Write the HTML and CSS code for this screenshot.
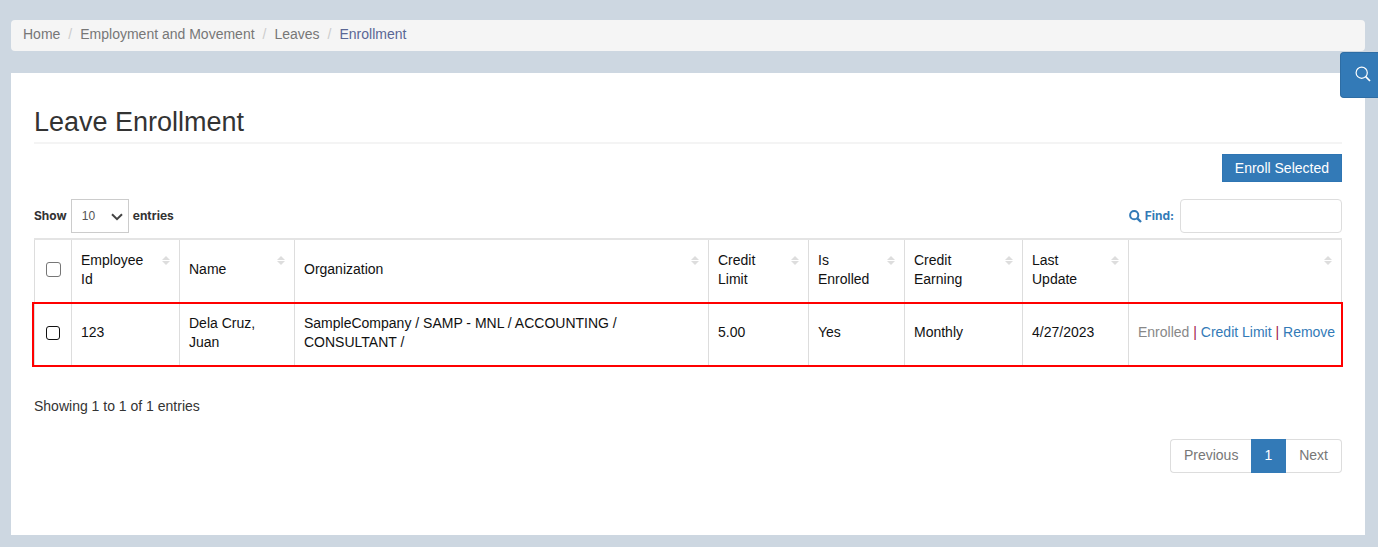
FILE: index.html
```html
<!DOCTYPE html>
<html lang="en">
<head>
<meta charset="utf-8">
<title>Leave Enrollment</title>
<link rel="stylesheet" href="styles.css">
</head>
<body>
<nav aria-label="Breadcrumb">
  <ol class="breadcrumb">
    <li><a href="#">Home</a></li>
    <li><a href="#">Employment and Movement</a></li>
    <li><a href="#">Leaves</a></li>
    <li><a class="current" href="#" aria-current="page">Enrollment</a></li>
  </ol>
</nav>
<button class="search-tab" type="button" aria-label="Search">
  <svg width="16" height="16" viewBox="0 0 16 16" fill="none" stroke="currentColor" stroke-width="1.2"><circle cx="6.7" cy="6.7" r="5.6"/><path d="M10.7 10.7 15 15" stroke-width="1.7"/></svg>
</button>
<main class="panel">
  <h1 class="title">Leave Enrollment</h1>
  <div class="actions"><button class="enroll" type="button">Enroll Selected</button></div>
  <div class="tools">
    <div class="length">
      <label for="length">Show</label>
      <span class="select-wrap">
        <select id="length"><option>10</option><option>25</option><option>50</option></select>
        <svg class="chevron" width="12" height="8" viewBox="0 0 12 8" fill="none" stroke="currentColor" stroke-width="2"><path d="M1 1.2 6 6.2 11 1.2"/></svg>
      </span>
      <span>entries</span>
    </div>
    <div class="find">
      <label for="find"><svg width="13" height="13" viewBox="0 0 13 13" fill="none" stroke="currentColor" stroke-width="2"><circle cx="5.2" cy="5.2" r="4.1"/><path d="M8.3 8.3 12 12" stroke-width="2.4"/></svg>Find:</label>
      <input id="find" type="text">
    </div>
  </div>
  <table class="grid">
    <colgroup>
      <col class="c-check"><col class="c-id"><col class="c-name"><col><col class="c-limit"><col class="c-enrolled"><col class="c-earning"><col class="c-update"><col class="c-actions">
    </colgroup>
    <thead>
      <tr>
        <th class="check"><input type="checkbox" aria-label="Select all"></th>
        <th class="sortable">Employee Id</th>
        <th class="sortable">Name</th>
        <th class="sortable">Organization</th>
        <th class="sortable">Credit Limit</th>
        <th class="sortable">Is Enrolled</th>
        <th class="sortable">Credit Earning</th>
        <th class="sortable">Last Update</th>
        <th class="sortable" aria-label="Actions"></th>
      </tr>
    </thead>
    <tbody>
      <tr class="marked">
        <td class="check"><input class="dark" type="checkbox" aria-label="Select Dela Cruz, Juan"></td>
        <td>123</td>
        <td>Dela Cruz, Juan</td>
        <td class="org">SampleCompany / SAMP - MNL / ACCOUNTING / CONSULTANT /</td>
        <td>5.00</td>
        <td>Yes</td>
        <td>Monthly</td>
        <td>4/27/2023</td>
        <td class="links"><span class="muted">Enrolled</span> <span class="bar">|</span> <a href="#">Credit Limit</a> <span class="bar">|</span> <a href="#">Remove</a></td>
      </tr>
    </tbody>
  </table>
  <p class="info">Showing 1 to 1 of 1 entries</p>
  <nav class="pager" aria-label="Pages">
    <a href="#">Previous</a><a class="active" href="#" aria-current="page">1</a><a href="#">Next</a>
  </nav>
</main>
</body>
</html>
```
FILE: styles.css
```css
* { box-sizing: border-box; }
body {
  margin: 0;
  padding: 20px 13px 12px 11px;
  background: #cdd7e1;
  color: #333;
  font: 14px/20px "Liberation Sans", Arial, sans-serif;
}
a { color: #337ab7; text-decoration: none; }
button, input, select { font: inherit; margin: 0; }

.breadcrumb {
  display: flex;
  margin: 0 0 22px;
  padding: 4px 12px 7px;
  list-style: none;
  background: #f5f5f5;
  border-radius: 4px;
}
.breadcrumb li + li::before { content: "/"; padding: 0 8px; color: #ccc; }
.breadcrumb a { color: #777; }
.breadcrumb .current { color: #5a6795; }

.search-tab {
  position: absolute;
  top: 52px;
  right: 0;
  width: 38px;
  height: 46px;
  padding: 0 0 2px 7px;
  display: flex;
  align-items: center;
  justify-content: center;
  color: #fff;
  background: #337ab7;
  border: 1px solid #2e6da4;
  border-right: 0;
  border-radius: 4px 0 0 4px;
}

.panel { padding: 33px 23px 62px; background: #fff; }
.title {
  margin: 0;
  padding-bottom: 3px;
  border-bottom: 2px solid #f4f4f4;
  font-size: 27px;
  line-height: 33px;
  font-weight: 400;
}
.actions { display: flex; justify-content: flex-end; padding: 10px 0 17px; }
.enroll {
  padding: 3px 12px;
  border: 1px solid #2e75b3;
  background: #337ab7;
  color: #fff;
}

.tools {
  display: flex;
  justify-content: space-between;
  padding-bottom: 5px;
  font: bold 12px/16px Inter, sans-serif;
}
.length, .find { display: flex; align-items: center; }
.length { gap: 4px; }
.find { gap: 6px; color: #337ab7; }
.find label { display: flex; align-items: center; gap: 3px; }
.find input {
  width: 162px;
  height: 34px;
  border: 1px solid #ddd;
  border-radius: 4px;
}
.select-wrap { display: flex; position: relative; }
.select-wrap select {
  appearance: none;
  width: 58px;
  height: 34px;
  padding: 0 10px;
  border: 1px solid #ccc;
  border-radius: 0;
  background: #fff;
  color: #555;
  font: 12px "Liberation Sans", Arial, sans-serif;
}
.chevron { position: absolute; right: 6px; top: 14px; color: #444; pointer-events: none; }

.grid {
  width: 100%;
  table-layout: fixed;
  border-collapse: collapse;
  line-height: 19px;
  color: #111;
}
.c-check { width: 37px; }
.c-id { width: 108px; }
.c-name { width: 115px; }
.c-limit { width: 100px; }
.c-enrolled { width: 96px; }
.c-earning { width: 118px; }
.c-update { width: 106px; }
.c-actions { width: 213px; }
.grid th, .grid td {
  height: 63px;
  padding: 0 9px 2px;
  border: 1px solid #ddd;
  text-align: left;
  vertical-align: middle;
  font-weight: 400;
}
.grid thead th { border-top: 2px solid #e4e4e4; }
.grid .check { padding: 0 0 2px; text-align: center; }
.grid th.sortable { position: relative; padding-right: 28px; }
.sortable::before, .sortable::after {
  content: "";
  position: absolute;
  right: 9px;
  border: solid transparent;
  border-width: 0 4px;
}
.sortable::before { top: 16px; border-bottom: 4px solid #ddd; }
.sortable::after { top: 21px; border-top: 4px solid #ddd; }
.grid td.org { padding-right: 90px; }
.grid td.links { padding-right: 4px; white-space: nowrap; }
.muted { color: #888; }
.bar { color: #a0204a; }
.grid input {
  appearance: none;
  display: block;
  width: 15px;
  height: 15px;
  margin: 0 auto;
  border: 1px solid #767676;
  border-radius: 3px;
  background: #fff;
}
.grid .dark { width: 14px; height: 14px; border-color: #111; }
.marked { position: relative; }
.marked .check::before {
  content: "";
  position: absolute;
  inset: 0 -1px -2px -3px;
  border: 2px solid #f00;
  pointer-events: none;
}

.info { margin: 0; padding: 30px 0 23px; }
.pager { display: flex; justify-content: flex-end; }
.pager a {
  padding: 5px 13px 7px;
  border: 1px solid #ddd;
  color: #777;
}
.pager a + a { border-left: 0; }
.pager a:first-child { border-radius: 4px 0 0 4px; border-right: 0; }
.pager a:last-child { border-radius: 0 4px 4px 0; }
.pager .active { background: #337ab7; border-color: #337ab7; color: #fff; }
```
